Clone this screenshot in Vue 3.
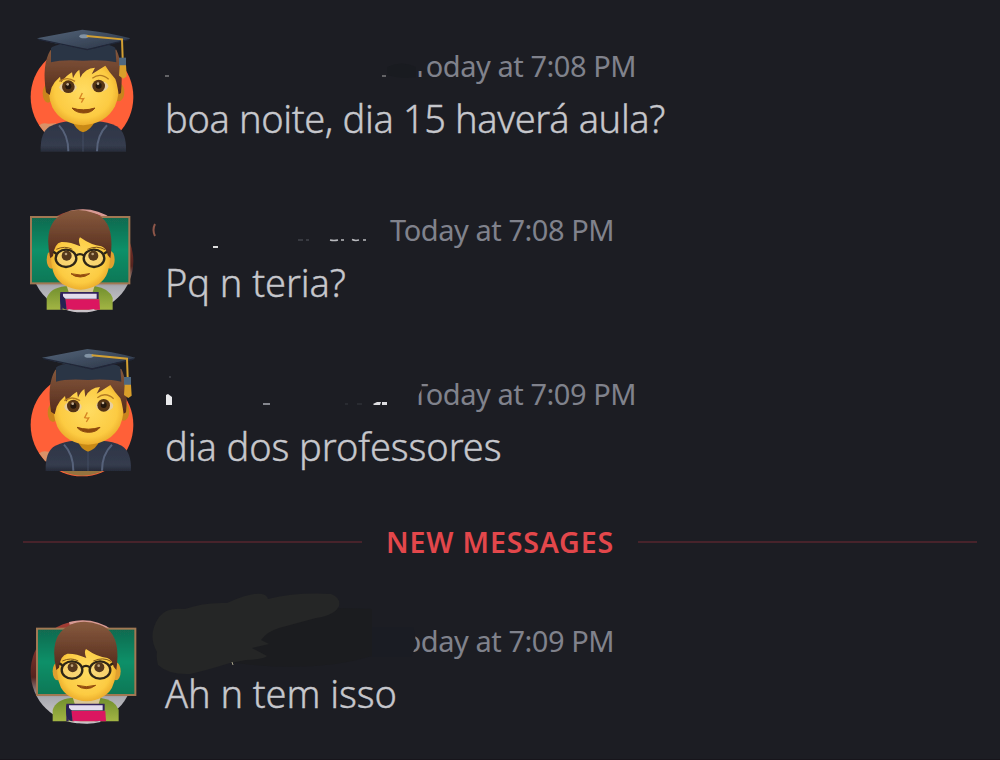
<script setup>
import { ref } from 'vue';

const messages = ref([
    { id: 1, role: 'student', time: 'Today at 7:08 PM', text: 'boa noite, dia 15 haverá aula?' },
    { id: 2, role: 'teacher', time: 'Today at 7:08 PM', text: 'Pq n teria?' },
    { id: 3, role: 'student', time: 'Today at 7:09 PM', text: 'dia dos professores' },
    { id: 4, role: 'teacher', time: 'Today at 7:09 PM', text: 'Ah n tem isso', isNew: true },
]);
</script>

<template>
    <div class="chat">
        <!-- shared drawings for the avatars -->
        <svg class="defs" width="0" height="0">
            <defs>
                <radialGradient id="skin" cx="50%" cy="48%" r="58%">
                    <stop offset="0" stop-color="#ffdc62" />
                    <stop offset="0.7" stop-color="#fccb42" />
                    <stop offset="1" stop-color="#e5a022" />
                </radialGradient>
                <linearGradient id="hair" x1="0" y1="0" x2="0" y2="1">
                    <stop offset="0" stop-color="#875a3e" />
                    <stop offset="1" stop-color="#532a1b" />
                </linearGradient>
                <linearGradient id="cap" x1="0" y1="0" x2="1" y2="1">
                    <stop offset="0" stop-color="#53657a" />
                    <stop offset="1" stop-color="#2b3445" />
                </linearGradient>
                <linearGradient id="gown" x1="0" y1="0" x2="0" y2="1">
                    <stop offset="0" stop-color="#2c3445" />
                    <stop offset="0.8" stop-color="#353c4e" />
                    <stop offset="1" stop-color="#262b38" />
                </linearGradient>
                <linearGradient id="board" x1="0" y1="0" x2="0" y2="1">
                    <stop offset="0" stop-color="#12694f" />
                    <stop offset="0.5" stop-color="#0d9068" />
                    <stop offset="1" stop-color="#087756" />
                </linearGradient>
                <linearGradient id="shirt" x1="0" y1="0" x2="0" y2="1">
                    <stop offset="0" stop-color="#718f2e" />
                    <stop offset="1" stop-color="#a3b544" />
                </linearGradient>
                <linearGradient id="photo" x1="0" y1="0" x2="0" y2="1">
                    <stop offset="0" stop-color="#a83d35" />
                    <stop offset="0.55" stop-color="#54241f" />
                    <stop offset="0.75" stop-color="#a9aab0" />
                    <stop offset="1" stop-color="#d2ced0" />
                </linearGradient>
                <filter id="soft" x="-5%" y="-5%" width="110%" height="110%">
                    <feGaussianBlur stdDeviation="2" />
                </filter>

                <g id="student" filter="url(#soft)">
                    <path d="M77 410Q75 350 106 334Q135 321 163 319H243Q280 320 305 334Q335 352 333 410Z" fill="url(#gown)" />
                    <path d="M172 318Q182 345 204 352Q228 345 240 318L232 304H176Z" fill="#c98a16" />
                    <path d="M132 331Q160 360 160 409M276 331Q246 360 246 409" fill="none" stroke="#57627a" stroke-width="6" />
                    <path d="M204 352V410" stroke="#4d5970" stroke-width="2" />
                    <ellipse cx="99" cy="235" rx="16" ry="28" fill="#c9841d" />
                    <ellipse cx="311" cy="231" rx="17" ry="28" fill="#c9841d" />
                    <path d="M101 181Q109 135 203 133Q297 135 310 181Q316 238 300 274Q273 326 205 331Q138 327 112 277Q96 240 101 181Z" fill="url(#skin)" />
                    <path d="M93 232Q80 150 106 106Q203 92 304 104Q326 150 318 234L311 238Q306 205 301 192Q283 172 271 152L230 178L240 158Q210 159 196 188L193 164Q181 172 174 190L171 172Q158 178 138 202L135 185Q118 199 110 217L104 240Z" fill="url(#hair)" />
                    <path d="M108 100Q118 84 202 88Q291 83 301 100L304 142Q265 133 204 137Q139 133 108 142Z" fill="#2b3445" />
                    <path d="M66 70L202 44Q276 51 346 70Q333 79 297 84L218 102Q139 94 66 70Z" fill="url(#cap)" />
                    <path d="M71 73L217 104L341 74" fill="none" stroke="#202737" stroke-width="4" />
                    <ellipse cx="207" cy="64" rx="14" ry="6" fill="#8293a4" />
                    <path d="M215 63L321 73L323 129" fill="none" stroke="#d3a032" stroke-width="6" />
                    <path d="M312 128H333V153H312Z" fill="#50677f" />
                    <path d="M314 151H333L335 184L325 191L312 182Z" fill="#d99f2b" />
                    <path d="M133 199Q156 183 180 199M232 190Q256 171 281 193" fill="none" stroke="#b57c23" stroke-width="4" />
                    <ellipse cx="159" cy="217" rx="26" ry="16" fill="#e8cf9f" />
                    <ellipse cx="254" cy="214" rx="26" ry="16" fill="#e8cf9f" />
                    <circle cx="160" cy="215" r="19" fill="#573514" />
                    <circle cx="251" cy="213" r="19" fill="#573514" />
                    <circle cx="160" cy="214" r="9" fill="#20150d" />
                    <circle cx="251" cy="212" r="9" fill="#20150d" />
                    <circle cx="158" cy="208" r="4" fill="#c2ab8d" />
                    <circle cx="249" cy="206" r="4" fill="#c2ab8d" />
                    <path d="M202 234L194 250Q199 252 206 251L199 263" fill="none" stroke="#d78524" stroke-width="4" />
                    <path d="M171 279Q205 290 240 279Q229 294 205 294Q182 293 171 279Z" fill="#8b4810" stroke="#8b4810" stroke-width="3" />
                </g>

                <g id="teacher" filter="url(#soft)">
                    <rect x="48" y="66" width="295" height="199" fill="url(#board)" stroke="#a17853" stroke-width="6" />
                    <path d="M95 344V310Q105 279 150 274H240Q282 280 293 309V344Z" fill="url(#shirt)" />
                    <path d="M155 272H239L231 298H163Z" fill="#d9c797" />
                    <ellipse cx="109" cy="194" rx="14" ry="27" fill="#e0a02f" />
                    <ellipse cx="285" cy="194" rx="14" ry="27" fill="#e0a02f" />
                    <path d="M111 150Q132 107 197 105Q262 109 282 150Q291 208 273 243Q252 280 197 284Q142 280 120 243Q102 208 111 150Z" fill="url(#skin)" />
                    <path d="M106 190Q82 85 147 55Q186 36 236 54Q303 76 286 190L278 180Q274 159 259 154Q229 151 195 127Q188 135 196 154Q165 140 139 141Q118 145 114 183Z" fill="url(#hair)" />
                    <path d="M124 163Q150 151 172 163M217 163Q246 150 270 164" fill="none" stroke="#805419" stroke-width="3" />
                    <ellipse cx="153" cy="190" rx="31" ry="26" fill="#f6d791" fill-opacity="0.5" stroke="#2d2519" stroke-width="7" />
                    <ellipse cx="237" cy="190" rx="31" ry="26" fill="#f6d791" fill-opacity="0.5" stroke="#2d2519" stroke-width="7" />
                    <path d="M183 182Q195 173 207 182M124 176L115 170M267 176L276 170" fill="none" stroke="#2d2519" stroke-width="7" />
                    <circle cx="155" cy="182" r="15" fill="#54371a" />
                    <circle cx="235" cy="182" r="15" fill="#54371a" />
                    <circle cx="153" cy="177" r="4" fill="#bba17c" />
                    <circle cx="233" cy="177" r="4" fill="#bba17c" />
                    <path d="M168 236Q196 244 224 236Q211 246 196 246Q179 246 168 236Z" fill="#944c10" stroke="#944c10" stroke-width="3" />
                    <path d="M136 291H251V312H143V344H136Z" fill="#32205b" />
                    <path d="M144 296H245V311H144Z" fill="#e3dcec" />
                    <path d="M150 313H253L255 344H155Z" fill="#db1260" />
                    <path d="M136 295Q131 343 155 344L151 311Z" fill="#282052" />
                    <path d="M160 344Q198 354 238 344" fill="none" stroke="#c7c0c7" stroke-width="4" />
                </g>
            </defs>
        </svg>

        <template v-for="message in messages" :key="message.id">
            <div v-if="message.isNew" class="divider">
                <span class="divider-line"></span>
                <span class="divider-label">NEW MESSAGES</span>
                <span class="divider-line"></span>
            </div>
            <div class="message" :class="[message.role, 'message-' + message.id]">
                <svg class="avatar" viewBox="0 0 450 492">
                    <template v-if="message.role === 'student'">
                        <circle cx="246" cy="246" r="154" fill="#ff6038" />
                        <path d="M118 331Q126 322 145 326L168 325V365L135 354Z" fill="#d99268" />
                        <path v-if="message.id === 3" d="M170 376H325Q246 421 170 376Z" fill="#94733f" />
                    </template>
                    <template v-else>
                        <circle cx="246" cy="246" r="154" fill="url(#photo)" />
                        <path d="M208 100Q278 83 334 123" fill="none" stroke="#d79a94" stroke-width="8" />
                    </template>
                    <use v-if="message.id === 1" href="#student" x="45" y="0" />
                    <use v-if="message.id === 2" href="#teacher" x="45" y="48" />
                    <use v-if="message.id === 3" href="#student" x="60" y="-26" />
                    <use v-if="message.id === 4" href="#teacher" x="63" y="50" />
                </svg>
                <div class="message-body">
                    <div class="message-header">
                        <span class="author"></span>
                        <span class="timestamp">{{ message.time }}</span>
                    </div>
                    <p class="message-text">{{ message.text }}</p>
                </div>

                <!-- marker strokes over the author name -->
                <svg v-if="message.id === 1" class="redaction" viewBox="140 15 310 100">
                    <path d="M400 50H430V60L424 63V71H400Z" fill="#1c1d23" />
                    <path d="M387 67Q402 60 416 67V77Q400 79 387 75Z" fill="#191b20" />
                    <path d="M165 76H169M382 76H386" stroke="#aaa" />
                </svg>
                <svg v-else-if="message.id === 2" class="redaction" viewBox="140 179 310 100">
                    <path d="M155 224Q152 230 155 236" fill="none" stroke="#8d5649" stroke-width="2" />
                    <path d="M213 247H218" stroke="#ddd" stroke-width="2" />
                    <path d="M298 240H303M306 240H309" stroke="#555860" />
                    <path d="M330 240Q334 241 338 240M341 240H344M352 239.500Q355 241 359 240M363 240H366" fill="none" stroke="#b9babe" stroke-width="1.5" />
                </svg>
                <svg v-else-if="message.id === 3" class="redaction" viewBox="140 343 310 100">
                    <path d="M405 380H421L422 388H420L416 398V405H405Z" fill="#1c1d23" />
                    <path d="M416 387H423L418 396H416Z" fill="#1c1d23" />
                    <path d="M166 395L168 394L172 397V405H166Z" fill="#e9e9eb" />
                    <path d="M169 377H171" stroke="#555860" />
                    <path d="M263 404H270" stroke="#85878e" stroke-width="2" />
                    <path d="M373 404L377 402H381L380 405H374ZM382 402H387V405H382Z" fill="#dddde0" />
                    <path d="M345 404H348M357 404H362" stroke="#373a41" />
                </svg>
                <svg v-else class="redaction" viewBox="140 590 310 100">
                    <path d="M252 614Q320 606 372 609V656Q313 674 229 662Z" fill="#1b1c1f" />
                    <path d="M372 627H413Q419 642 411 657H372Z" fill="#1a1c23" />
                    <path d="M159 617Q166 607 185 609Q204 602 227 603Q251 592 262 594Q267 595 268 599Q297 592 331 594Q341 598 339 606Q335 615 316 618L279 628Q268 631 261 640L269 644L252 648L267 656Q265 659 246 660L230 663Q204 671 190 674Q169 675 158 665Q156 658 157 652Q147 635 159 617Z" fill="#252626" />
                    <path d="M232 662L233 665" stroke="#aaa48a" />
                </svg>
            </div>
        </template>
    </div>
</template>

<style>
body {
    margin: 0;
    background: #1c1d23;
}
</style>

<style scoped>
.chat {
    box-sizing: border-box;
    width: 1000px;
    height: 760px;
    padding-top: 15px;
    overflow: hidden;
    background: #1c1d23;
    border-bottom: 1px solid #17151b;
    font-family: "Noto Sans", "Open Sans", sans-serif;
}

.defs {
    display: block;
}

.message {
    position: relative;
    display: flex;
    height: 164px;
}

.avatar {
    flex: none;
    width: 150px;
    height: 164px;
    overflow: visible;
}

.message-body {
    padding: 31px 0 0 15px;
}

.message-header {
    display: flex;
    height: 40px;
    align-items: center;
}

.author {
    width: 225px;
}

.student .author {
    width: 247px;
}

.timestamp {
    color: #80828c;
    font-size: 29px;
    letter-spacing: -0.44px;
    line-height: 40px;
    white-space: pre;
}

.message-text {
    margin: 6px 0 0;
    color: #c6c7cc;
    font-size: 38px;
    font-weight: 300;
    letter-spacing: -0.08px;
    line-height: 52px;
    white-space: pre;
    -webkit-text-stroke: 0.4px #c6c7cc;
}

.message-1 .message-text {
    letter-spacing: -0.38px;
}

.redaction {
    position: absolute;
    left: 140px;
    top: 0;
    width: 310px;
    height: 100px;
}

.divider {
    display: flex;
    align-items: center;
    gap: 24px;
    height: 70px;
    margin-bottom: 13px;
    padding: 0 23px;
}

.divider-line {
    flex: 1;
    height: 2px;
    background: #47232b;
}

.divider-label {
    color: #e3474b;
    font-size: 28.5px;
    font-weight: 600;
    letter-spacing: 0.85px;
    line-height: 36px;
}
</style>
